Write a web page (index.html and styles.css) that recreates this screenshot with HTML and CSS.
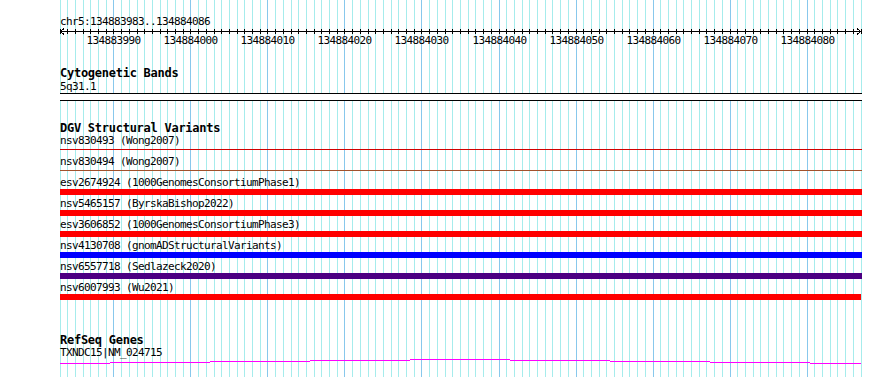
FILE: index.html
```html
<!DOCTYPE html>
<html lang="en">
<head>
    <meta charset="UTF-8">
    <title>chr5:134883983..134884086</title>
    <link rel="stylesheet" href="styles.css">
</head>
<body>
    <div class="browser">
        <!-- base guidelines, drawn by the script below -->
        <svg class="grid" id="grid" width="890" height="377"></svg>

        <div class="tracks">
            <div class="position">chr5:134883983..134884086</div>
            <svg class="ruler" id="ruler" width="840" height="20">
                <rect x="0" y="4" width="801" height="1" fill="#000"/>
                <polyline points="4,1.5 0.5,4.5 4,7.5" fill="none" stroke="#000"/>
                <polyline points="797,1.5 800.5,4.5 797,7.5" fill="none" stroke="#000"/>
            </svg>

            <div class="track cyto">
                <h2>Cytogenetic Bands</h2>
                <div class="label">5q31.1</div>
                <div class="band"></div>
            </div>

            <div class="track dgv">
                <h2>DGV Structural Variants</h2>
                <div class="label">nsv830493 (Wong2007)</div>
                <div class="bar thin loss-line"></div>
                <div class="label">nsv830494 (Wong2007)</div>
                <div class="bar thin both-line"></div>
                <div class="label">esv2674924 (1000GenomesConsortiumPhase1)</div>
                <div class="bar loss"></div>
                <div class="label">nsv5465157 (ByrskaBishop2022)</div>
                <div class="bar loss"></div>
                <div class="label">esv3606852 (1000GenomesConsortiumPhase3)</div>
                <div class="bar loss"></div>
                <div class="label">nsv4130708 (gnomADStructuralVariants)</div>
                <div class="bar gain"></div>
                <div class="label">nsv6557718 (Sedlazeck2020)</div>
                <div class="bar inversion"></div>
                <div class="label">nsv6007993 (Wu2021)</div>
                <div class="bar loss last"></div>
            </div>

            <div class="track refseq">
                <h2>RefSeq Genes</h2>
                <div class="label">TXNDC15|NM_024715</div>
                <svg class="gene" id="gene" width="802" height="8"></svg>
            </div>
        </div>
    </div>

    <script>
        const start = 134883983;
        const end = 134884086;
        const left = 60;
        const scale = 7.702;
        const ns = 'http://www.w3.org/2000/svg';

        function rect(parent, x, y, w, h, color) {
            const r = document.createElementNS(ns, 'rect');
            r.setAttribute('x', x);
            r.setAttribute('y', y);
            r.setAttribute('width', w);
            r.setAttribute('height', h);
            r.setAttribute('fill', color);
            parent.appendChild(r);
        }

        const grid = document.getElementById('grid');
        const ruler = document.getElementById('ruler');

        for (let k = 0; k <= end - start + 1; k++) {
            const x = Math.floor(left + k * scale);
            const major = (start + k) % 10 === 0;
            rect(grid, x, 0, 1, 377, major ? '#88c8ec' : '#a6ecec');
            rect(ruler, x - left, 2, 1, 5, '#000');

            if (major) {
                const t = document.createElementNS(ns, 'text');
                t.setAttribute('x', x - left + 0.5);
                t.setAttribute('y', 17);
                t.setAttribute('text-anchor', 'middle');
                t.textContent = start + k;
                ruler.appendChild(t);
            }
        }

        const gene = document.getElementById('gene');
        const steps = [[0, 50, 5], [50, 150, 4], [150, 250, 3], [250, 350, 2], [350, 450, 1],
                       [450, 550, 2], [550, 650, 3], [650, 750, 4], [750, 801, 5]];
        steps.forEach(s => rect(gene, s[0], s[2], s[1] - s[0], 1, '#ff00ff'));
    </script>
</body>
</html>
```

FILE: styles.css
```css
body {
    margin: 0;
    background-color: #fff;
}
.browser {
    position: relative;
    width: 890px;
    height: 377px;
    overflow: hidden;
    font-family: "DejaVu Sans Mono", "Liberation Mono", monospace;
    font-size: 11px;
    line-height: 11px;
    letter-spacing: -0.62px;
    color: #000;
}
.grid {
    position: absolute;
    left: 0;
    top: 0;
    shape-rendering: crispEdges;
}
.tracks {
    position: relative;
    padding: 16px 0 0 60px;
}
.position {
    height: 11px;
}
.ruler {
    display: block;
    overflow: visible;
    shape-rendering: crispEdges;
}
.ruler text {
    font-family: "DejaVu Sans Mono", "Liberation Mono", monospace;
    font-size: 11px;
    letter-spacing: -0.62px;
    fill: #000;
}
.track h2 {
    margin: 0;
    font-size: 12px;
    line-height: 13px;
    letter-spacing: -0.26px;
    font-weight: bold;
}
.label {
    height: 11px;
    white-space: nowrap;
}
.cyto {
    margin-top: 20px;
}
.cyto .label {
    margin-top: 1px;
}
.band {
    margin-top: 1px;
    width: 802px;
    height: 8px;
    box-sizing: border-box;
    border-top: 1px solid #000;
    border-bottom: 1px solid #000;
    background-color: #fff;
}
.dgv {
    margin-top: 21px;
}
.bar {
    width: 802px;
    height: 6px;
    margin: 1px 0 3px;
}
.bar.thin {
    height: 1px;
    margin: 3px 0 6px;
}
.bar.last {
    width: 801px;
}
.loss {
    background-color: #ff0000;
}
.gain {
    background-color: #0000ff;
}
.inversion {
    background-color: #4b0082;
}
.loss-line {
    background-color: #d00000;
}
.both-line {
    background-color: #a0522d;
}
.refseq {
    margin-top: 34px;
}
.gene {
    display: block;
    shape-rendering: crispEdges;
}
```
